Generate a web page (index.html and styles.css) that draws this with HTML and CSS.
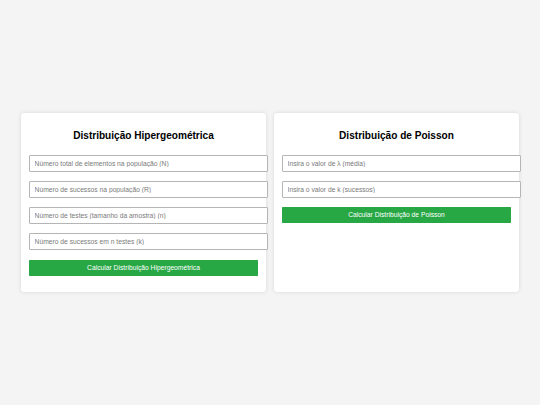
FILE: index.html
```html
<!DOCTYPE html>
<html lang="pt-BR">
<head>
<meta charset="utf-8">
<title>Distribuições</title>
<link rel="stylesheet" href="styles.css">
</head>
<body>
<div class="container">
  <div class="card">
    <h2 class="title">Distribuição Hipergeométrica</h2>
    <input class="field" type="number" placeholder="Número total de elementos na população (N)">
    <input class="field" type="number" placeholder="Número de sucessos na população (R)">
    <input class="field" type="number" placeholder="Número de testes (tamanho da amostra) (n)">
    <input class="field" type="number" placeholder="Número de sucessos em n testes (k)">
    <button class="btn">Calcular Distribuição Hipergeométrica</button>
  </div>
  <div class="card">
    <h2 class="title">Distribuição de Poisson</h2>
    <input class="field" type="number" placeholder="Insira o valor de λ (média)">
    <input class="field" type="number" placeholder="Insira o valor de k (sucessos)">
    <button class="btn">Calcular Distribuição de Poisson</button>
  </div>
</div>
</body>
</html>
```

FILE: styles.css
```css
html, body {
  margin: 0;
  padding: 0;
}
body {
  font-family: "Liberation Sans", Arial, sans-serif;
  background: #f4f4f4;
  height: 405px;
  display: flex;
  justify-content: center;
  align-items: center;
}
.container {
  display: flex;
  gap: 8px;
  align-items: stretch;
}
.card {
  width: 245px;
  box-sizing: border-box;
  padding: 8.4px;
  background: #fff;
  border-radius: 3.4px;
  box-shadow: 0 0 4.2px rgba(0, 0, 0, 0.12);
  display: flex;
  flex-direction: column;
  align-items: stretch;
}
.title {
  font-size: 10.08px;
  line-height: 11.6px;
  font-weight: bold;
  text-align: center;
  margin: 8.4px 0;
  color: #000;
}
.field {
  display: block;
  box-sizing: border-box;
  width: calc(100% + 10px);
  height: 17px;
  padding: 0 4.2px;
  margin: 4.6px 0;
  border: 1px solid #b5b5b5;
  border-radius: 1px;
  font-family: "Liberation Sans", Arial, sans-serif;
  font-size: 6.72px;
  background: #fff;
  outline: none;
  -moz-appearance: textfield;
}
.field::-webkit-outer-spin-button,
.field::-webkit-inner-spin-button {
  -webkit-appearance: none;
  margin: 0;
}
.field::placeholder {
  color: #7a7a7a;
}
.btn {
  display: block;
  width: 100%;
  height: 16.1px;
  padding: 0;
  margin: 4.6px 0 7.5px;
  border: none;
  border-radius: 0.8px;
  background: #28a745;
  color: #fff;
  font-family: "Liberation Sans", Arial, sans-serif;
  font-size: 6.72px;
  line-height: 16.1px;
  text-align: center;
}
```
